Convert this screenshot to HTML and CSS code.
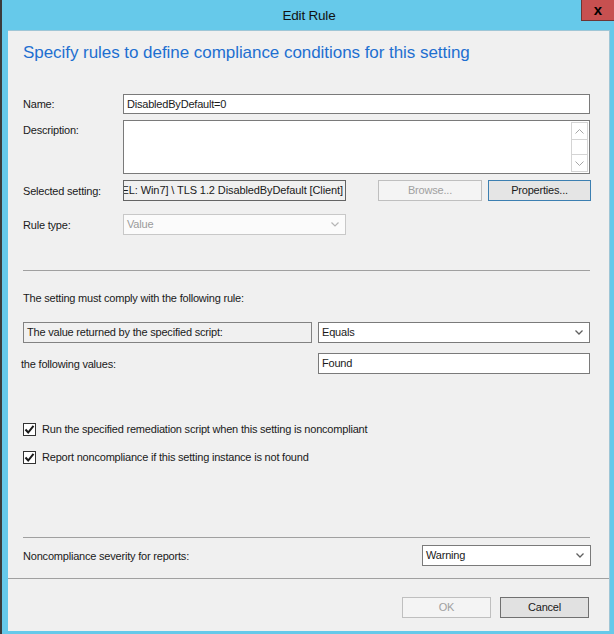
FILE: index.html
```html
<!DOCTYPE html>
<html>
<head>
<meta charset="utf-8">
<link rel="stylesheet" href="styles.css">
</head>
<body>
<div class="window">
  <div class="titlebar">
    <div></div>
    <div class="title">Edit Rule</div>
    <div class="close-wrap"><div class="close">x</div></div>
  </div>
  <div class="client">
    <div class="main">
      <h1 class="heading">Specify rules to define compliance conditions for this setting</h1>
      <div class="form">
        <div class="row row-name">
          <div class="label">Name:</div>
          <div class="field input">DisabledByDefault=0</div>
        </div>
        <div class="row row-desc">
          <div class="label label-top">Description:</div>
          <div class="field textarea">
            <div class="scrollbar">
              <div class="sb-btn"><svg width="9" height="5" viewBox="0 0 9 5"><polyline points="0.5,4.5 4.5,0.5 8.5,4.5" fill="none" stroke="#a6a6a6" stroke-width="1"/></svg></div>
              <div class="sb-track"></div>
              <div class="sb-btn"><svg width="9" height="5" viewBox="0 0 9 5"><polyline points="0.5,0.5 4.5,4.5 8.5,0.5" fill="none" stroke="#a6a6a6" stroke-width="1"/></svg></div>
            </div>
          </div>
        </div>
        <div class="row row-setting">
          <div class="label">Selected setting:</div>
          <div class="setting-fields">
            <div class="field readonly"><span class="clip">EL: Win7] \ TLS 1.2 DisabledByDefault [Client]</span></div>
            <div class="btn btn-disabled btn-browse">Browse...</div>
            <div class="btn btn-focus btn-props">Properties...</div>
          </div>
        </div>
        <div class="row row-type">
          <div class="label">Rule type:</div>
          <div class="field combo combo-disabled combo-type">
            <span>Value</span>
            <svg class="chev" width="8" height="5" viewBox="0 0 8 5"><polyline points="0.5,0.5 4,4 7.5,0.5" fill="none" stroke="#b5b5b5" stroke-width="1.2"/></svg>
          </div>
        </div>
      </div>

      <div class="sep sep-rule"></div>

      <p class="rule-intro">The setting must comply with the following rule:</p>
      <div class="rule-row">
        <div class="rule-box">The value returned by the specified script:</div>
        <div class="field combo combo-eq">
          <span>Equals</span>
          <svg class="chev" width="8" height="5" viewBox="0 0 8 5"><polyline points="0.5,0.5 4,4 7.5,0.5" fill="none" stroke="#606060" stroke-width="1.3"/></svg>
        </div>
      </div>
      <div class="rule-row rule-row2">
        <div class="values-label">the following values:</div>
        <div class="field input input-found">Found</div>
      </div>

      <div class="checks">
        <label class="check">
          <span class="box"><svg width="11" height="11" viewBox="0 0 11 11"><polyline points="1.5,5.5 4.2,8.5 9.5,1.8" fill="none" stroke="#1a1a1a" stroke-width="2"/></svg></span>
          <span>Run the specified remediation script when this setting is noncompliant</span>
        </label>
        <label class="check">
          <span class="box"><svg width="11" height="11" viewBox="0 0 11 11"><polyline points="1.5,5.5 4.2,8.5 9.5,1.8" fill="none" stroke="#1a1a1a" stroke-width="2"/></svg></span>
          <span>Report noncompliance if this setting instance is not found</span>
        </label>
      </div>

      <div class="sep sep-sev"></div>
      <div class="sev-row">
        <div class="sev-label">Noncompliance severity for reports:</div>
        <div class="field combo combo-sev">
          <span>Warning</span>
          <svg class="chev" width="8" height="5" viewBox="0 0 8 5"><polyline points="0.5,0.5 4,4 7.5,0.5" fill="none" stroke="#606060" stroke-width="1.3"/></svg>
        </div>
      </div>
    </div>
    <div class="footer">
      <div class="btn btn-disabled btn-ok">OK</div>
      <div class="btn btn-cancel">Cancel</div>
    </div>
  </div>
</div>
</body>
</html>
```

FILE: styles.css
```css
* { box-sizing: border-box; }
html, body { margin: 0; padding: 0; }
body {
  width: 614px;
  height: 634px;
  overflow: hidden;
  background: #66c9ea;
  font-family: "Liberation Sans", Arial, sans-serif;
  font-size: 11px;
  letter-spacing: -0.2px;
  color: #1a1a1a;
}
.window {
  width: 614px;
  height: 634px;
  background: #66c9ea;
  border-left: 2px solid #3b3b3b;
  display: flex;
  flex-direction: column;
}
.titlebar {
  height: 30px;
  display: grid;
  grid-template-columns: 1fr auto 1fr;
  align-items: start;
}
.title {
  font-size: 13.5px;
  letter-spacing: -0.2px;
  color: #111;
  line-height: 18px;
  padding-top: 7px;
  margin-left: 2px;
}
.close-wrap { display: flex; justify-content: flex-end; }
.close {
  width: 33px;
  height: 21px;
  background: #c75050;
  border: 1px solid #6e3434;
  border-top: none;
  border-right: none;
  color: #000;
  font-weight: bold;
  font-size: 15px;
  letter-spacing: 0;
  text-align: center;
  line-height: 19px;
}
.client {
  margin-left: 6px;
  width: 602px;
  height: 601px;
  background: #f0f0f0;
  border-top: 1px solid #9fc6d6;
  border-right: 1px solid #9fc6d6;
  display: flex;
  flex-direction: column;
}
.main {
  padding: 0 19px 0 15px;
  height: 548px;
  border-bottom: 1px solid #a0a0a0;
}
.heading {
  margin: 11px 0 0 0;
  font-weight: normal;
  font-size: 17px;
  letter-spacing: -0.05px;
  line-height: 22px;
  color: #1e6fd0;
}
.form {
  margin-top: 30px;
  display: flex;
  flex-direction: column;
}
.row {
  display: grid;
  grid-template-columns: 100px 1fr;
  align-items: center;
}
.label { line-height: 14px; }
.label-top { align-self: start; padding-top: 3px; }
.field {
  background: #fff;
  border: 1px solid #7a7a7a;
  height: 20px;
  line-height: 18px;
  padding: 0 3px;
  white-space: nowrap;
}
.row-desc { margin-top: 6px; }
.textarea {
  height: 54px;
  display: flex;
  justify-content: flex-end;
  padding: 1px;
}
.scrollbar {
  width: 17px;
  display: flex;
  flex-direction: column;
  border: 1px solid #d4d4d4;
  background: #fff;
}
.sb-btn {
  height: 17px;
  display: flex;
  align-items: center;
  justify-content: center;
}
.sb-btn:first-child { border-bottom: 1px solid #d4d4d4; }
.sb-btn:last-child { border-top: 1px solid #d4d4d4; }
.sb-track { flex: 1; }
.row-setting { margin-top: 6px; }
.setting-fields {
  display: flex;
  align-items: center;
}
.readonly {
  width: 223px;
  height: 21px;
  background: #f0f0f0;
  border-color: #646464;
  overflow: hidden;
  padding: 0 2px 0 0;
  line-height: 19px;
  display: flex;
  justify-content: flex-end;
}
.clip { flex: none; letter-spacing: -0.1px; }
.btn {
  height: 21px;
  border: 1px solid #adadad;
  background: #e1e1e1;
  text-align: center;
  line-height: 19px;
}
.btn-disabled {
  background: #f4f4f4;
  border-color: #bfbfbf;
  color: #a0a0a0;
}
.btn-browse { width: 104px; margin-left: 32px; }
.btn-props {
  width: 103px;
  margin-left: 6px;
  border-color: #3c7fb1;
  background: #e5e5e5;
}
.row-type { margin-top: 13px; }
.combo {
  height: 21px;
  display: flex;
  align-items: center;
  justify-content: space-between;
  padding: 0 6px 0 3px;
  line-height: 19px;
}
.combo-disabled {
  width: 223px;
  border-color: #c8c8c8;
  color: #9a9a9a;
  background: #fbfbfb;
}
.sep {
  height: 1px;
  background: #a0a0a0;
}
.sep-rule { margin-top: 35px; }
.rule-intro {
  margin: 20px 0 0 0;
  line-height: 14px;
}
.rule-row {
  margin-top: 17px;
  display: flex;
  align-items: center;
  gap: 6px;
}
.rule-box {
  width: 289px;
  height: 21px;
  border: 1px solid #828282;
  padding: 0 3px;
  line-height: 19px;
}
.combo-eq { flex: 1; border-color: #7a7a7a; }
.rule-row2 { margin-top: 10px; }
.values-label {
  width: 289px;
  margin-left: -2px;
  margin-right: 2px;
}
.input-found { flex: 1; height: 21px; line-height: 19px; }
.checks {
  margin-top: 48px;
  display: flex;
  flex-direction: column;
  gap: 14px;
}
.check {
  display: flex;
  align-items: center;
  gap: 6px;
  line-height: 14px;
}
.box {
  width: 13px;
  height: 13px;
  border: 1px solid #333;
  background: #fff;
  display: flex;
  align-items: center;
  justify-content: center;
}
.sep-sev { margin-top: 73px; }
.sev-row {
  margin-top: 7px;
  display: flex;
  align-items: center;
  justify-content: space-between;
}
.combo-sev { width: 169px; margin-right: -1px; border-color: #7a7a7a; }
.footer {
  flex: 1;
  display: flex;
  justify-content: flex-end;
  align-items: flex-start;
  padding: 18px 20px 0 0;
  gap: 9px;
  background: #f0f0f0;
}
.btn-ok, .btn-cancel { width: 89px; }
.btn-cancel { border-color: #707070; background: #e1e1e1; }
```
